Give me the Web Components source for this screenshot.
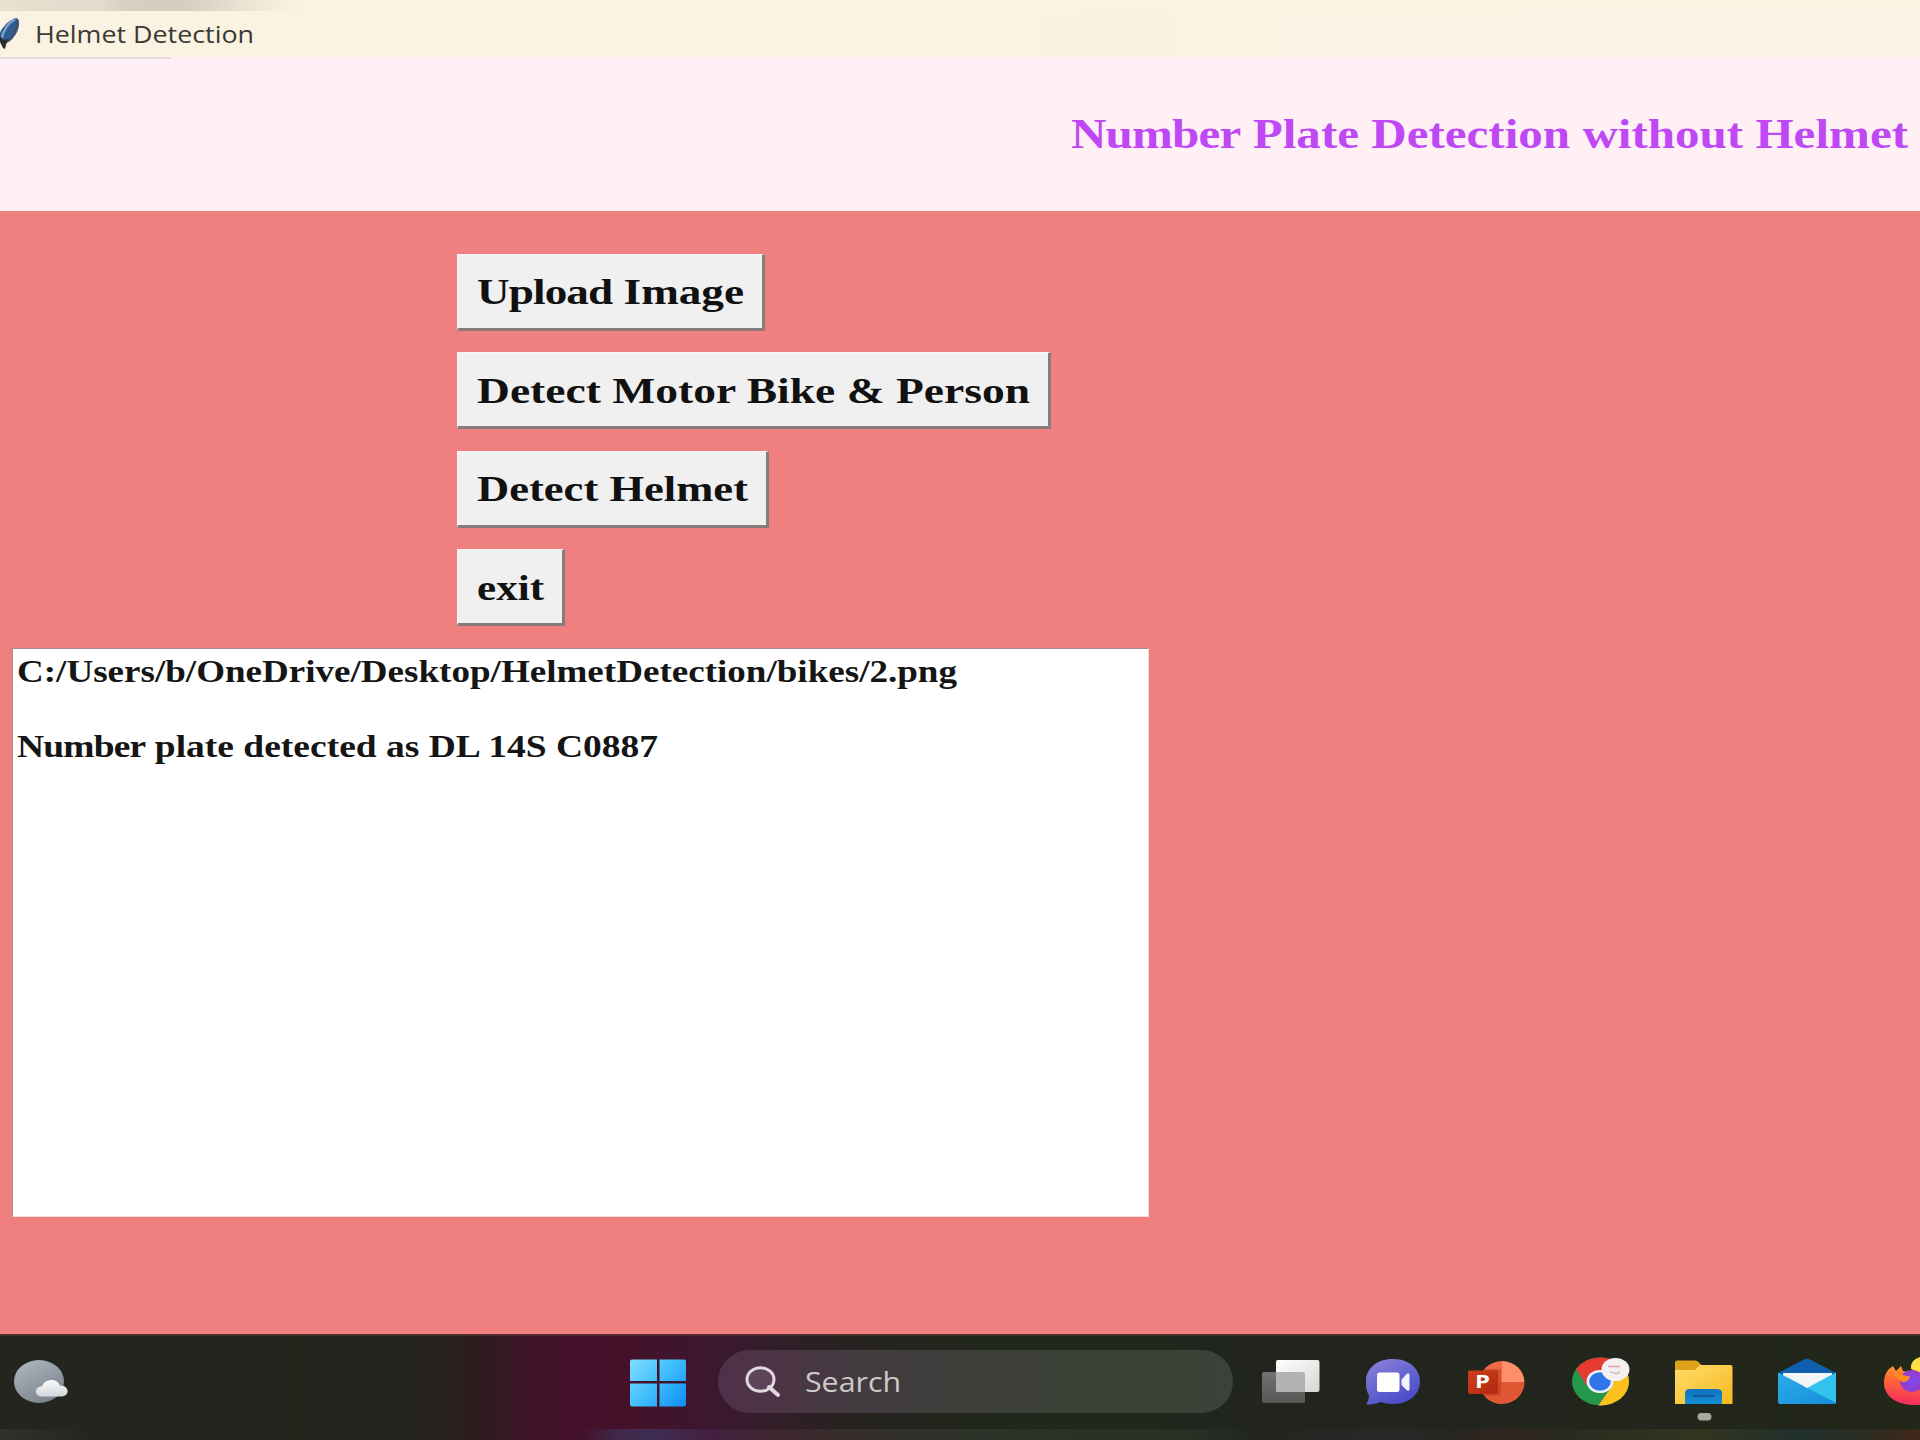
<!DOCTYPE html>
<html lang="en">
<head>
<meta charset="utf-8">
<title>Helmet Detection</title>
<style>
html,body{margin:0;padding:0}
body{width:1920px;height:1440px;overflow:hidden;background:#f08080}
</style>
</head>
<body>
<app-desktop></app-desktop>
<script>
const define = (name, html, init) => customElements.define(name, class extends HTMLElement {
  constructor() {
    super();
    this.attachShadow({ mode: 'open' }).innerHTML = html;
  }
  connectedCallback() { if (init) init(this, this.shadowRoot); }
});

/* One line of text stretched horizontally to the width given in pixels */
define('fit-text', `<style>
:host{display:block;white-space:nowrap;flex:none;text-align:left}
span{display:inline-block;transform-origin:0 50%}
</style><span><slot></slot></span>`, (el, root) => {
  const width = +el.getAttribute('width');
  el.style.width = width + 'px';
  const span = root.querySelector('span');
  const fit = () => {
    span.style.transform = 'none';
    const natural = span.getBoundingClientRect().width;
    if (natural) span.style.transform = `scaleX(${width / natural})`;
  };
  fit();
  requestAnimationFrame(fit);
});

define('title-bar', `<style>
:host{display:flex;flex-direction:column;height:57px;background:#faf3e1;flex:none}
.edge{height:11px;background:linear-gradient(90deg,#e9e1d0 0,#e5ddcd 50px,#e3dccc 100px,#d8d1c3 125px,#d3ccbf 170px,#dcd5c7 205px,#e9e2d2 240px,#f8f1df 290px,#faf3e1 300px)}
.row{display:flex;align-items:center;height:46px;background:linear-gradient(90deg,#faf3e1 0,#faf3e1 1000px,#fbf2e6 1920px)}
svg{width:24px;height:36px;margin-right:11px;flex:none}
fit-text{font:24px/34px "Open Sans","Noto Sans",sans-serif;color:#3b3a35}
</style>
<div class="edge"></div>
<div class="row">
<svg viewBox="0 0 24 36"><path d="M16 2c4 0 4 8 1 14-3 6-7 10-11 11-4 0-6-1-8-3C-2 16 7 4 16 2z" fill="#2f5b93"/><path d="M15 3C8 7 3 15 1 25" stroke="#7fa1c9" stroke-width="2.500" fill="none"/><path d="M17.500 4c0 9-4 17-11 22" stroke="#4a4e55" stroke-width="1.600" fill="none"/><path d="M0 20l4 4 4-1-2 6-1 4-2-1-3-6z" fill="#272c31"/></svg>
<fit-text width="219"><slot></slot></fit-text>
</div>`);

define('page-banner', `<style>
:host{display:flex;flex-direction:column;height:154px;background:#fff0f5;flex:none}
i{display:block;width:171px;height:2px;background:#eadde1}
.line{display:flex;justify-content:flex-end;padding:51px 12px 0 0}
fit-text{font:bold 42px/48px "Liberation Serif",serif;color:#bf48f5}
</style><i></i><div class="line"><fit-text width="837"><slot></slot></fit-text></div>`);

define('tk-button', `<style>
:host{display:block}
button{display:flex;align-items:center;height:77px;padding:2px 18px 0 19px;margin:0;border:solid;border-width:1px 3px 3px 1px;border-color:#fbf6f6 #8a7b7b #8a7b7b #fbf6f6;background:#f0f0f0;box-sizing:border-box;color:#111}
fit-text{font:bold 36px/42px "Liberation Serif",serif}
</style><button><fit-text><slot></slot></fit-text></button>`, (el, root) => {
  const t = root.querySelector('fit-text');
  const next = document.createElement('fit-text');
  next.setAttribute('width', el.getAttribute('text-width'));
  next.append(document.createElement('slot'));
  t.replaceWith(next);
});

define('tk-log', `<style>
:host{display:block;box-sizing:border-box;width:1137px;height:569px;background:#fff;border:solid;border-width:1px;border-color:#a98f8f #f5dcdc #f5dcdc #a98f8f;padding:4px 0 0 4px;font:bold 32px/37.400px "Liberation Serif",serif;color:#151515}
</style><slot></slot>`);

define('task-search', `<style>
:host{display:flex;align-items:center;box-sizing:border-box;width:515px;height:63px;border-radius:32px;padding-left:25px;background:linear-gradient(90deg,#50304a 0,#4c3445 60px,#443b41 130px,#3e3d3c 210px,#3b4037 340px,#394135 440px,#3c4239 515px);flex:none}
svg{width:38px;height:34px;margin-right:24px;flex:none}
fit-text{font:27px/38px "Open Sans","Noto Sans",sans-serif;color:#cfcaca}
</style>
<svg viewBox="0 0 38 34"><ellipse cx="17.5" cy="14.5" rx="13.5" ry="11.7" fill="#69526599" stroke="#e2d8df" stroke-width="3"/><path d="M26 22l9 8" stroke="#e2d8df" stroke-width="4" stroke-linecap="round"/></svg>
<fit-text width="96"><slot></slot></fit-text>`);

const icons = {
weather:`<defs><linearGradient id="a" x2=".6" y2="1"><stop stop-color="#b1bac5"/><stop offset="1" stop-color="#7d858d"/></linearGradient><linearGradient id="b" x2="0" y2="1"><stop stop-color="#fafafa"/><stop offset="1" stop-color="#d3d7db"/></linearGradient></defs><ellipse cx="25" cy="29.500" rx="25" ry="21.500" fill="url(#a)"/><path d="M28 44.500c-8 0-8-10 0-10 2-8 15-9 18-1 10 0 10 11 1 11z" fill="url(#b)"/>`,
windows:`<defs><linearGradient id="a" gradientUnits="userSpaceOnUse" x1="0" y1="8" x2="56" y2="56"><stop stop-color="#82dcff"/><stop offset=".5" stop-color="#3dbdfc"/><stop offset="1" stop-color="#0a8cf5"/></linearGradient></defs><path fill="url(#a)" d="M2 7.500h25v21.500H0V9.500q0-2 2-2zM29.500 7.500H54q2 0 2 2V29H29.500zM0 31.500h27v23H2q-2 0-2-2zM29.500 31.500H56V52.500q0 2-2 2H29.500z"/>`,
tasks:`<defs><linearGradient id="a" x2="1" y2="1"><stop stop-color="#fff"/><stop offset="1" stop-color="#d6d6d6"/></linearGradient><linearGradient id="b" x2="0" y2="1"><stop stop-color="#737373"/><stop offset="1" stop-color="#565656"/></linearGradient></defs><rect y="20" width="43" height="31" rx="2" fill="url(#b)"/><rect x="14" y="8" width="43.500" height="32" rx="2" fill="url(#a)"/><path d="M14 20h27q2 0 2 2v18H16q-2 0-2-2z" fill="#b2b2b2"/>`,
chat:`<defs><linearGradient id="a" x1=".1" x2=".7" y2="1"><stop stop-color="#8c80d8"/><stop offset=".55" stop-color="#6264cf"/><stop offset="1" stop-color="#4a49c9"/></linearGradient></defs><path d="M27 7c36 0 36 45 0 45-5 0-9-1-12-2-5 2-10 2.500-15 2.500 2-3 3-6 3-9C-5 29 1 7 27 7z" fill="url(#a)"/><rect x="11" y="20.500" width="22.500" height="19.500" rx="2.500" fill="#fff"/><path d="M35.500 28l5-6q3-2 3 1v14q0 3-3 1l-5-5z" fill="#f3f2ff"/>`,
ppt:`<defs><clipPath id="c"><ellipse cx="34" cy="30.500" rx="22.500" ry="21.500"/></clipPath><linearGradient id="a" x2="1" y2="1"><stop stop-color="#d03c1b"/><stop offset="1" stop-color="#b02a12"/></linearGradient></defs><g clip-path="url(#c)"><path fill="#ed6c47" d="M11 8h24v44H11z"/><path fill="#ff8f6b" d="M34 8h24v22H34z"/><path fill="#df5833" d="M11 30h47v23H11z"/><path fill="#b93a1d" opacity=".55" d="M11 17h20q2 0 2 2v25H11z"/></g><rect y="18.500" width="30" height="23.500" rx="2" fill="url(#a)"/><text x="7" y="36" textLength="15" lengthAdjust="spacingAndGlyphs" font-family="Open Sans" font-weight="bold" font-size="17" fill="#fff">P</text>`,
chrome:`<defs><clipPath id="c"><ellipse cx="28.500" cy="29.500" rx="28.500" ry="24"/></clipPath></defs><g clip-path="url(#c)"><path d="M0 0h60v60H0z" fill="#24974b"/><path d="M28 22h32v38H28l-2-6 14-20z" fill="#fbc01d"/><path d="M3 15L15 2h45v20H28q-11 1-13 12z" fill="#e63b31"/></g><ellipse cx="28" cy="29.500" rx="13.500" ry="11.500" fill="#e6effc"/><ellipse cx="28" cy="29.500" rx="10.800" ry="9.300" fill="#2e76e8"/><ellipse cx="43.500" cy="17.500" rx="14" ry="11.500" fill="#f5efef"/><path d="M36 14.500h12" stroke="#e3a9aa" stroke-width="1.600"/><path d="M38 19.500q7 4 10 0" stroke="#cfc5c7" stroke-width="2" fill="none"/>`,
folder:`<defs><linearGradient id="a" x2="1" y2="1"><stop stop-color="#ffdc6d"/><stop offset="1" stop-color="#f6b91c"/></linearGradient><linearGradient id="b" x2="0" y2="1"><stop stop-color="#1072bf"/><stop offset="1" stop-color="#1490d4"/></linearGradient></defs><path d="M2 8.500h18q2 0 4 2l4 4v6H0v-10q0-2 2-2z" fill="#dda11a"/><path d="M0 18h20l5-5h30.500q2 0 2 2v37H0z" fill="url(#a)"/><path d="M10 52V41q0-4 5-4h27q5 0 5 4v11z" fill="url(#b)"/><path d="M19 44h19" stroke="#0d5ea4" stroke-width="2.500" stroke-linecap="round"/><rect x="22.500" y="61" width="14" height="7.500" rx="3.700" fill="#a7a8a2"/>`,
mail:`<defs><linearGradient id="a" x2="1" y2="1"><stop stop-color="#2caeea"/><stop offset="1" stop-color="#168cdb"/></linearGradient></defs><path d="M0 21L27 7q2-1 4 0l27 14v4H0z" fill="#105fae"/><path d="M5 21h49v20H5z" fill="#f2f5f8"/><path d="M58 20.500V50q0 2-2 2L27 37z" fill="#31c2ee"/><path d="M0 20.500L58 51q-1 1-3 1H2q-2 0-2-2z" fill="url(#a)"/><path d="M7 21h46L29 36z" fill="#f2f5f8"/>`,
firefox:`<defs><linearGradient id="a" x1=".5" x2=".4" y2="1"><stop stop-color="#ffb62b"/><stop offset=".45" stop-color="#ff6b35"/><stop offset="1" stop-color="#f42a62"/></linearGradient><radialGradient id="b"><stop stop-color="#7b4bea"/><stop offset="1" stop-color="#963bca"/></radialGradient></defs><path d="M5 17l4-3 3 5 5-5 2 5 8 1 8-13 20 14v22q-10 11-26 10C9 52 0 42 0 31q0-9 5-14z" fill="url(#a)"/><path d="M27 17q-1-9 9-12l8 17z" fill="#ffe044"/><ellipse cx="28" cy="29" rx="12" ry="11" fill="url(#b)"/><path d="M10 23c6-3 10 2 16 1q-1 6-8 6z" fill="#ff8a24"/>`
};

/* Taskbar glyph: fixed height, width from attribute */
customElements.define('task-icon', class extends HTMLElement {
  connectedCallback() {
    const w = this.getAttribute('width');
    this.attachShadow({ mode: 'open' }).innerHTML =
      `<style>:host{display:block;flex:none;width:${w}px;height:80px}svg{display:block}</style>
       <svg width="${w}" height="80" viewBox="0 -10 ${w} 80">${icons[this.getAttribute('name')]}</svg>`;
  }
});

define('task-bar', `<style>
:host{display:flex;flex-direction:column;height:106px;flex:none;overflow:hidden;background:linear-gradient(90deg,#25251f 0,#22261d 300px,#24241d 410px,#2d1d20 480px,#3d1526 520px,#44112a 570px,#431229 630px,#3d1730 710px,#301f28 780px,#25231f 860px,#22261c 960px,#1f281a 1080px,#21251e 1250px,#22251d 1500px,#222719 1920px)}
:host::before{content:"";height:2px;background:#6b3b3680;flex:none;margin-bottom:-2px}
.row{display:flex;align-items:center;height:95px;box-sizing:border-box;padding-left:14px}
.pane{display:flex;width:616px;flex:none}
.search{margin-left:32px;margin-right:29px}
.apps{display:flex;flex:none}
.edge{height:11px;background:linear-gradient(90deg,#30312e 0,#292a24 60px,#24261f00 90px,#24261f00 580px,#41284a 620px,#3f2d55 650px,#432040 710px,#40272f 770px,#332e2b 870px,#2b3328 1000px,#293125 1180px,#22251f 1260px,#29292a 1400px,#252620 1450px,#332620 1500px,#292b20 1570px,#333420 1700px,#20302d 1800px,#2d2c20 1870px,#402718 1920px)}
</style>
<div class="row">
<div class="pane"><task-icon name="weather" width="54"></task-icon></div>
<task-icon name="windows" width="56"></task-icon>
<task-search class="search">Search</task-search>
<div class="apps">
<task-icon name="tasks" width="58"></task-icon>
<task-icon name="chat" width="54" style="margin-left:46px"></task-icon>
<task-icon name="ppt" width="57" style="margin-left:48px"></task-icon>
<task-icon name="chrome" width="58" style="margin-left:47px"></task-icon>
<task-icon name="folder" width="58" style="margin-left:45px"></task-icon>
<task-icon name="mail" width="58" style="margin-left:45px"></task-icon>
<task-icon name="firefox" width="56" style="margin-left:48px"></task-icon>
</div>
</div>
<div class="edge"></div>`);

define('app-desktop', `<style>
:host{display:flex;flex-direction:column;width:1920px;height:1440px;overflow:hidden;background:#f08080}
main{display:flex;flex-direction:column;flex:1;min-height:0;box-sizing:border-box;padding:42.500px 0 0 12px}
.actions{display:flex;flex-direction:column;align-items:flex-start;gap:21.600px;padding-left:444.500px;margin-bottom:22px}
.tight{letter-spacing:-.7px}
</style>
<title-bar>Helmet Detection</title-bar>
<page-banner><span class="tight">Number</span> Plate Detection without Helmet</page-banner>
<main>
<div class="actions">
<tk-button text-width="267"><span class="tight">Upload</span> Image</tk-button>
<tk-button text-width="553">Detect Motor Bike &amp; Person</tk-button>
<tk-button text-width="271">Detect Helmet</tk-button>
<tk-button text-width="67">exit</tk-button>
</div>
<tk-log><fit-text width="940">C:/Users/b/OneDrive/Desktop/HelmetDetection/bikes/2.png</fit-text><br><fit-text width="641"><span class="tight">Number</span> plate detected as DL 14S C0887</fit-text></tk-log>
</main>
<task-bar></task-bar>`);
</script>
</body>
</html>
